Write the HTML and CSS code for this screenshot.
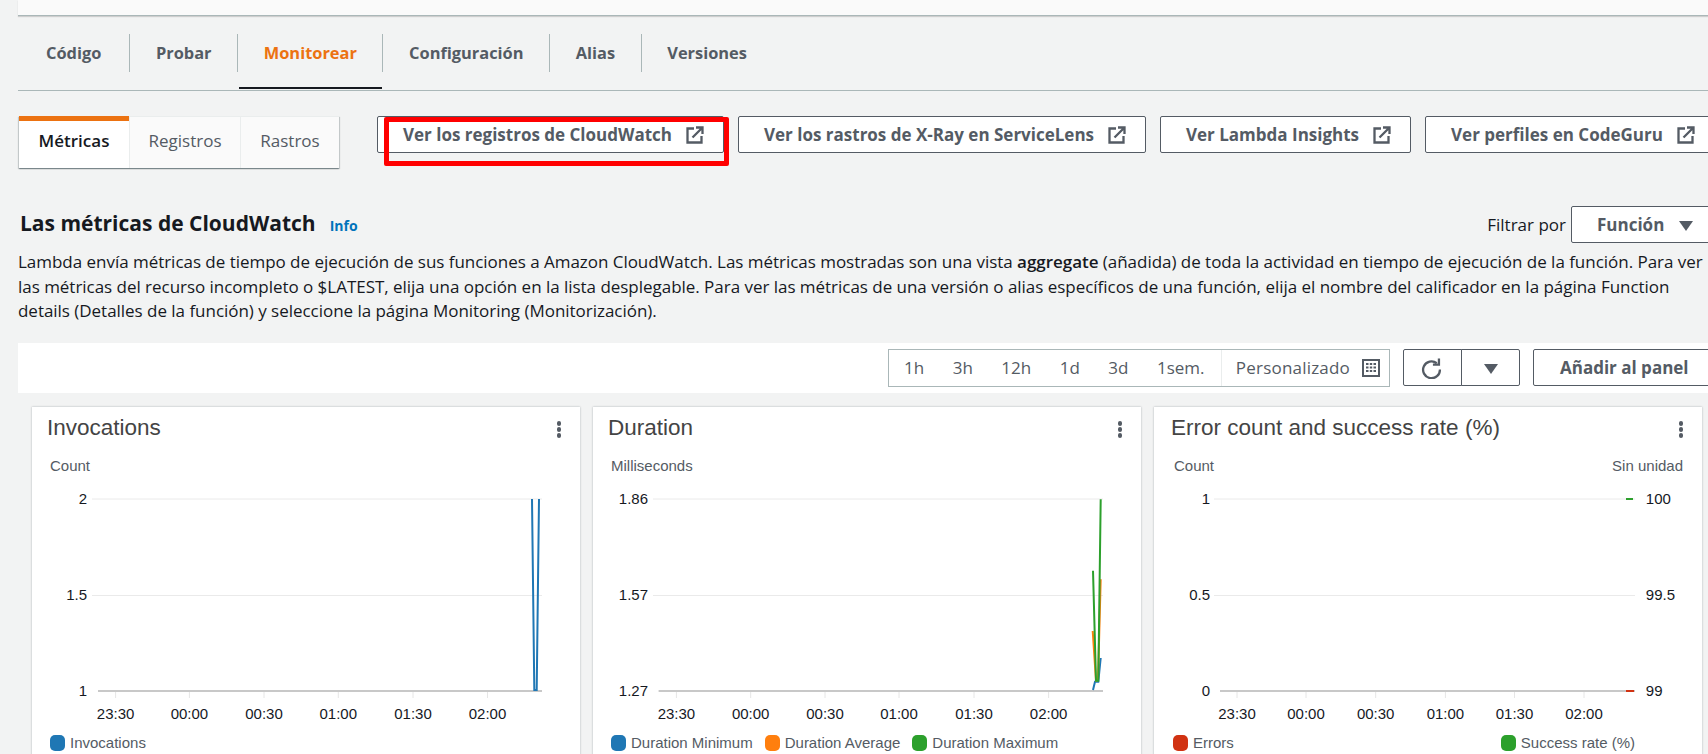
FILE: index.html
```html
<!DOCTYPE html>
<html lang="es">
<head>
    <meta charset="UTF-8">
    <meta name="viewport" content="width=device-width, initial-scale=1.0">
    <link rel="stylesheet" href="styles.css">
    <title>Monitorear</title>
</head>
<body>

    <div class="top-box"></div>

    <nav class="main-tabs">
        <a class="main-tab">Código</a>
        <a class="main-tab">Probar</a>
        <a class="main-tab active">Monitorear</a>
        <a class="main-tab">Configuración</a>
        <a class="main-tab">Alias</a>
        <a class="main-tab">Versiones</a>
    </nav>

    <div class="actions-row">
        <div class="sub-tabs">
            <a class="sub-tab active">Métricas</a>
            <a class="sub-tab">Registros</a>
            <a class="sub-tab">Rastros</a>
        </div>
        <div class="link-buttons">
            <button class="btn first-link">Ver los registros de CloudWatch
                <svg class="ext-icon" viewBox="0 0 18 18"><path d="M8 2.500H1.500v14h14V10"/><path d="M6.500 11.500 15.500 2.500M10 1.500h6.500V8"/></svg>
                <span class="red-box"></span>
            </button>
            <button class="btn">Ver los rastros de X-Ray en ServiceLens
                <svg class="ext-icon" viewBox="0 0 18 18"><path d="M8 2.500H1.500v14h14V10"/><path d="M6.500 11.500 15.500 2.500M10 1.500h6.500V8"/></svg>
            </button>
            <button class="btn">Ver Lambda Insights
                <svg class="ext-icon" viewBox="0 0 18 18"><path d="M8 2.500H1.500v14h14V10"/><path d="M6.500 11.500 15.500 2.500M10 1.500h6.500V8"/></svg>
            </button>
            <button class="btn">Ver perfiles en CodeGuru
                <svg class="ext-icon" viewBox="0 0 18 18"><path d="M8 2.500H1.500v14h14V10"/><path d="M6.500 11.500 15.500 2.500M10 1.500h6.500V8"/></svg>
            </button>
        </div>
    </div>

    <div class="section-head">
        <h2>Las métricas de CloudWatch</h2>
        <a class="info">Info</a>
        <div class="filter">
            <span>Filtrar por</span>
            <button class="btn select">Función <i class="caret"></i></button>
        </div>
    </div>

    <p class="desc">Lambda envía métricas de tiempo de ejecución de sus funciones a Amazon CloudWatch. Las métricas mostradas son una vista <b>aggregate</b> (añadida) de toda la actividad en tiempo de ejecución de la función. Para ver<br>las métricas del recurso incompleto o $LATEST, elija una opción en la lista desplegable. Para ver las métricas de una versión o alias específicos de una función, elija el nombre del calificador en la página Function<br>details (Detalles de la función) y seleccione la página Monitoring (Monitorización).</p>

    <div class="toolbar">
        <div class="ranges">
            <span class="range r1">1h</span>
            <span class="range">3h</span>
            <span class="range">12h</span>
            <span class="range">1d</span>
            <span class="range">3d</span>
            <span class="range">1sem.</span>
            <span class="range custom">Personalizado
                <svg class="cal-icon" viewBox="0 0 18 18"><rect x="1" y="1" width="16" height="16"/><path d="M4 5h2.500M7.800 5h2.400M11.500 5H14M4 8.500h2.500M7.800 8.500h2.400M11.500 8.500H14M4 12h2.500M7.800 12h2.400M11.500 12H14"/></svg>
            </span>
        </div>
        <div class="refresh-group">
            <button class="btn refresh">
                <svg class="refresh-icon" viewBox="0 0 22 22"><path d="M16.500 5.500A8.800 8.800 0 1 0 19.800 12"/><path d="M12.500 7H18.800V0.500"/></svg>
            </button>
            <button class="btn refresh-menu"><i class="caret"></i></button>
        </div>
        <button class="btn add-panel">Añadir al panel</button>
    </div>

    <div class="cards">

        <section class="card">
            <header class="card-head"><h3>Invocations</h3><span class="dots"><i></i><i></i><i></i></span></header>
            <div class="units"><span>Count</span></div>
            <svg class="chart" viewBox="0 0 548 248">
                <path class="grid" d="M60 22H510M60 118.500H510"/>
                <path class="base" d="M66 214H510"/>
                <path class="tick" d="M83.600 215v6M157.400 215v6M232 215v6M306.300 215v6M381 215v6M455.500 215v6"/>
                <g class="y-left">
                    <text x="55" y="26.500">2</text>
                    <text x="55" y="123">1.5</text>
                    <text x="55" y="218.500">1</text>
                </g>
                <g class="x-labels">
                    <text x="83.600" y="242">23:30</text>
                    <text x="157.400" y="242">00:00</text>
                    <text x="232" y="242">00:30</text>
                    <text x="306.300" y="242">01:00</text>
                    <text x="381" y="242">01:30</text>
                    <text x="455.500" y="242">02:00</text>
                </g>
                <polyline class="line blue" points="500,22 502.300,213 504.700,213 507,22"/>
            </svg>
            <div class="legend">
                <span class="legend-item"><i class="swatch bg-blue"></i>Invocations</span>
            </div>
        </section>

        <section class="card">
            <header class="card-head"><h3>Duration</h3><span class="dots"><i></i><i></i><i></i></span></header>
            <div class="units"><span>Milliseconds</span></div>
            <svg class="chart" viewBox="0 0 548 248">
                <path class="grid" d="M60 22H510M60 118.500H510"/>
                <path class="base" d="M65.600 214H510"/>
                <path class="tick" d="M83.400 215v6M157.700 215v6M232 215v6M306 215v6M381 215v6M455.600 215v6"/>
                <g class="y-left">
                    <text x="55" y="26.500">1.86</text>
                    <text x="55" y="123">1.57</text>
                    <text x="55" y="218.500">1.27</text>
                </g>
                <g class="x-labels">
                    <text x="83.400" y="242">23:30</text>
                    <text x="157.700" y="242">00:00</text>
                    <text x="232" y="242">00:30</text>
                    <text x="306" y="242">01:00</text>
                    <text x="381" y="242">01:30</text>
                    <text x="455.600" y="242">02:00</text>
                </g>
                <polyline class="line blue" points="500,213 502,204.700 505.300,204.700 507.700,181"/>
                <polyline class="line orange" points="499.700,154 503,203.700 505,203 507.700,102.300"/>
                <polyline class="line green" points="500,93.700 503,203.700 505.300,203.700 507.700,22.300"/>
            </svg>
            <div class="legend">
                <span class="legend-item"><i class="swatch bg-blue"></i>Duration Minimum</span>
                <span class="legend-item"><i class="swatch bg-orange"></i>Duration Average</span>
                <span class="legend-item"><i class="swatch bg-green"></i>Duration Maximum</span>
            </div>
        </section>

        <section class="card card-errors">
            <header class="card-head"><h3>Error count and success rate (%)</h3><span class="dots"><i></i><i></i><i></i></span></header>
            <div class="units"><span>Count</span><span>Sin unidad</span></div>
            <svg class="chart" viewBox="0 0 548 248">
                <path class="grid" d="M60 22H481M60 118.500H481"/>
                <path class="base" d="M66 214H481"/>
                <path class="tick" d="M83 215v6M152 215v6M221.700 215v6M291.400 215v6M360.500 215v6M430 215v6"/>
                <g class="y-left">
                    <text x="56" y="26.500">1</text>
                    <text x="56" y="123">0.5</text>
                    <text x="56" y="218.500">0</text>
                </g>
                <g class="y-right">
                    <text x="491.800" y="26.500">100</text>
                    <text x="491.800" y="123">99.5</text>
                    <text x="491.800" y="218.500">99</text>
                </g>
                <g class="x-labels">
                    <text x="83" y="242">23:30</text>
                    <text x="152" y="242">00:00</text>
                    <text x="221.700" y="242">00:30</text>
                    <text x="291.400" y="242">01:00</text>
                    <text x="360.500" y="242">01:30</text>
                    <text x="430" y="242">02:00</text>
                </g>
                <polyline class="line green" points="472,22 479,22"/>
                <polyline class="line red" points="472,214 480,214"/>
            </svg>
            <div class="legend spread">
                <span class="legend-item"><i class="swatch bg-red"></i>Errors</span>
                <span class="legend-item"><i class="swatch bg-green"></i>Success rate (%)</span>
            </div>
        </section>

    </div>

</body>
</html>
```

FILE: styles.css
```css
html, body {
    height: 754px;
    overflow: hidden;
}

body {
    width: 1708px;
    margin: 0;
    background-color: #f2f3f3;
    color: #16191f;
    font-family: 'Open Sans', 'Liberation Sans', sans-serif;
    font-size: 17px;
}

.top-box {
    height: 15px;
    margin-left: 18px;
    background-color: #fafafa;
    border-bottom: 1px solid #aab7b8;
    box-shadow: 0 1px 1px rgba(0, 0, 0, 0.15);
}

/* main tabs */
.main-tabs {
    display: flex;
    margin-left: 18px;
    padding: 18px 0 18px;
    border-bottom: 1px solid #aab7b8;
}

.main-tab {
    position: relative;
    height: 38px;
    line-height: 37px;
    padding: 0 25.6px;
    border-left: 1px solid #aab7b8;
    color: #545b64;
    font-size: 16.4px;
    font-weight: 700;
}

.main-tab:first-child {
    padding: 0 28px;
    border-left: none;
}

.main-tab.active {
    color: #ec7211;
}

.main-tab.active::after {
    content: "";
    position: absolute;
    left: 1px;
    right: 0;
    bottom: -17px;
    height: 2px;
    background-color: #16191f;
}

/* action row */
.actions-row {
    display: flex;
    align-items: flex-start;
    margin-top: 25px;
    padding-left: 19px;
}

.sub-tabs {
    display: flex;
    background-color: #fafafa;
    box-shadow: 0 1px 1px 0 rgba(0, 28, 36, 0.3), 1px 1px 1px 0 rgba(0, 28, 36, 0.15), -1px 1px 1px 0 rgba(0, 28, 36, 0.15);
}

.sub-tab {
    width: 110px;
    height: 47px;
    line-height: 40px;
    text-align: center;
    color: #545b64;
    border-top: 1px solid #eaeded;
    border-left: 1px solid #eaeded;
    box-sizing: content-box;
    padding-top: 4px;
}

.sub-tab.active {
    height: 47px;
    padding-top: 0;
    border-top: 5px solid #ec7211;
    border-left: none;
    background-color: #fff;
    color: #16191f;
    font-weight: 600;
}

.sub-tab:last-child {
    width: 98px;
}

.btn {
    height: 37px;
    padding: 0 20px;
    background-color: #fff;
    border: 1px solid #545b64;
    border-radius: 2px;
    color: #545b64;
    font-family: inherit;
    font-size: 17px;
    font-weight: 700;
    white-space: nowrap;
}

.link-buttons {
    display: flex;
    gap: 14px;
    margin-left: 38px;
}

.link-buttons .btn {
    display: flex;
    align-items: center;
    gap: 14px;
    padding: 0 19px 0 25px;
    flex: none;
}

.first-link {
    position: relative;
}

.red-box {
    position: absolute;
    left: 6px;
    top: 0;
    width: 345px;
    height: 49px;
    border: 5px solid #ff0000;
    border-radius: 2px;
    box-sizing: border-box;
}

.ext-icon {
    width: 18px;
    height: 18px;
    fill: none;
    stroke: #545b64;
    stroke-width: 2.3;
}

/* heading */
.section-head {
    display: flex;
    align-items: center;
    height: 37px;
    margin-top: 38px;
    padding-left: 20px;
}

.section-head h2 {
    margin: -3px 0 0;
    font-size: 21px;
    font-weight: 700;
}

.info {
    margin: 2px 0 0 14px;
    color: #0073bb;
    font-size: 14px;
    font-weight: 700;
}

.filter {
    display: flex;
    align-items: center;
    gap: 5px;
    margin-left: auto;
    margin-right: -80px;
}

.select {
    width: 217px;
    padding: 0 0 0 25px;
    text-align: left;
}

.caret {
    display: inline-block;
    width: 0;
    height: 0;
    margin-left: 10px;
    border-left: 7px solid transparent;
    border-right: 7px solid transparent;
    border-top: 10px solid #545b64;
}

.desc {
    margin: 7px 0 0 18px;
    line-height: 24.5px;
    letter-spacing: -0.03px;
    white-space: nowrap;
}

.desc b {
    font-weight: 600;
}

/* toolbar */
.toolbar {
    display: flex;
    align-items: center;
    height: 50px;
    margin: 19px 0 0 18px;
    padding-left: 870px;
    background-color: #fff;
}

.ranges {
    display: flex;
    align-items: center;
    flex: none;
    width: 502px;
    height: 38px;
    border: 1px solid #aab7b8;
    box-sizing: border-box;
    color: #545b64;
}

.range {
    flex: none;
    margin-left: 28.5px;
    white-space: nowrap;
}

.range.r1 {
    margin-left: 15px;
}

.range.custom {
    display: flex;
    align-items: center;
    gap: 12px;
    height: 100%;
    margin-left: auto;
    padding: 0 9px 0 14px;
    border-left: 1px solid #eaeded;
    letter-spacing: 0.2px;
}

.cal-icon {
    width: 18px;
    height: 18px;
    fill: none;
    stroke: #545b64;
    stroke-width: 2;
}

.refresh-group {
    display: flex;
    flex: none;
    margin-left: 13px;
}

.refresh {
    width: 59px;
    padding: 0 3px 0 0;
    border-radius: 2px 0 0 2px;
}

.refresh-menu {
    width: 59px;
    padding: 0;
    margin-left: -1px;
    border-radius: 0 2px 2px 0;
}

.refresh-menu .caret {
    margin: 0;
}

.refresh-icon {
    width: 21px;
    height: 21px;
    vertical-align: middle;
    fill: none;
    stroke: #545b64;
    stroke-width: 2.4;
}

.add-panel {
    flex: none;
    width: 190px;
    margin-left: 13px;
    padding: 0 0 0 26px;
    text-align: left;
}

/* chart cards */
.cards {
    display: flex;
    gap: 13px;
    margin-top: 14px;
    padding-left: 32px;
}

.card {
    flex: none;
    width: 548px;
    height: 354px;
    background-color: #fff;
    box-shadow: 0 0 2px rgba(0, 28, 36, 0.3);
    font-family: 'Liberation Sans', Arial, sans-serif;
}

.card-head {
    display: flex;
    align-items: center;
    justify-content: space-between;
    height: 40px;
    padding: 0 19px 8px 15px;
}

.card-errors .card-head {
    padding-left: 17px;
}

.card-head h3 {
    margin: 2px 0 0;
    color: #444;
    font-size: 22.5px;
    font-weight: 400;
}

.dots {
    display: flex;
    flex-direction: column;
    gap: 1.5px;
    margin-top: 6px;
}

.dots i {
    width: 4.500px;
    height: 4.500px;
    border-radius: 50%;
    background-color: #545b64;
}

.units {
    display: flex;
    justify-content: space-between;
    height: 22px;
    line-height: 22px;
    padding: 0 21px 0 18px;
    color: #545b64;
    font-size: 15px;
}

.card-errors .units {
    padding: 0 19px 0 20px;
}

.chart {
    display: block;
    width: 548px;
    height: 248px;
}

.grid {
    fill: none;
    stroke: #eaeaea;
    stroke-width: 1;
}

.base {
    fill: none;
    stroke: #c8c8c8;
    stroke-width: 2;
}

.tick {
    fill: none;
    stroke: #e6e6e6;
    stroke-width: 1;
}

.chart text {
    fill: #16191f;
    font-size: 15px;
}

.y-left text {
    text-anchor: end;
}

.x-labels text {
    text-anchor: middle;
}

.line {
    fill: none;
    stroke-width: 2;
}

.blue { stroke: #1f77b4; }
.orange { stroke: #ff7f0e; }
.green { stroke: #2ca02c; }
.red { stroke: #d13212; }

.legend {
    display: flex;
    gap: 12px;
    height: 36px;
    align-items: center;
    padding-left: 18px;
    color: #545b64;
    font-size: 15px;
}

.legend.spread {
    gap: 267px;
    padding-left: 19px;
}

.legend-item {
    display: flex;
    align-items: center;
    gap: 5px;
    white-space: nowrap;
}

.swatch {
    width: 15px;
    height: 16px;
    border-radius: 5px;
}

.bg-blue { background-color: #1f77b4; }
.bg-orange { background-color: #ff7f0e; }
.bg-green { background-color: #2ca02c; }
.bg-red { background-color: #d13212; }
```
